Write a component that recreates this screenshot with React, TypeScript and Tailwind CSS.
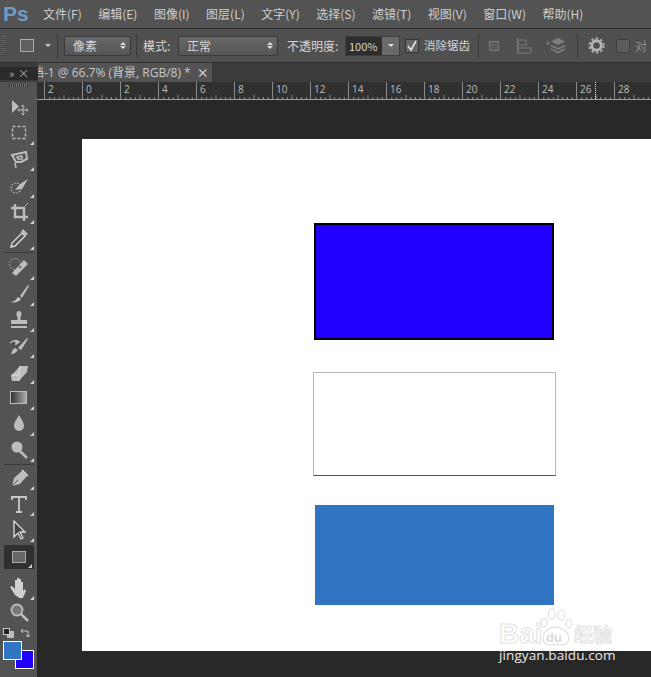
import type { ReactNode } from "react";

const menus = ["文件(F)", "编辑(E)", "图像(I)", "图层(L)", "文字(Y)", "选择(S)", "滤镜(T)", "视图(V)", "窗口(W)", "帮助(H)"];
const rulerLabels = ["2", "0", "2", "4", "6", "8", "10", "12", "14", "16", "18", "20", "22", "24", "26", "28"];

const c = "#bdbdbd";

function Icon({ children }: { children: ReactNode }) {
  return (
    <svg width="24" height="24" viewBox="0 0 24 24" fill="none">
      {children}
    </svg>
  );
}

function Corner() {
  return <span className="absolute right-[3px] bottom-[1px] h-0 w-0 border-l-[4px] border-b-[4px] border-l-transparent border-b-[#d0d0d0]" />;
}

// rows of the left toolbar, top to bottom
const tools: { h: number; corner?: boolean; line?: boolean; icon?: ReactNode }[] = [
  { h: 26, icon: <Icon><path d="M5 5v13l7-6.500z" fill={c} /><path d="M16 10v10M11 15h10M14.500 11.500L16 10l1.500 1.500M14.500 18.500L16 20l1.500-1.500M12.500 13.500L11 15l1.500 1.500M19.500 13.500L21 15l-1.500 1.500" stroke={c} strokeWidth="1" /></Icon> },
  { h: 26, corner: true, icon: <Icon><rect x="5.500" y="5.500" width="13" height="12" stroke={c} strokeWidth="1.500" strokeDasharray="3 2" /></Icon> },
  { h: 26, corner: true, icon: <Icon><path d="M5 8l14-3 1 7-6 3-5 0z" stroke={c} strokeWidth="2" /><path d="M10 10l5-1v3h-4zM8 16l1 5" stroke={c} strokeWidth="1.500" /></Icon> },
  { h: 27, corner: true, icon: <Icon><circle cx="9" cy="14" r="5" stroke={c} strokeWidth="1.200" strokeDasharray="1.500 1.500" /><path d="M21 5L13 10l-5 6 7-1z" fill={c} /></Icon> },
  { h: 26, corner: true, icon: <Icon><path d="M8 4v13h13M4 8h13v13" stroke={c} strokeWidth="2.400" /><path d="M18 6l3-3" stroke={c} /></Icon> },
  { h: 26, corner: true, icon: <Icon><path d="M4 21l1-4L15 7l3 3L8 20z" stroke="#d8d8d8" strokeWidth="1.400" /><path d="M14 6l2-3 5 5-3 2z" fill={c} /></Icon> },
  { h: 2, line: true },
  { h: 28, corner: true, icon: <Icon><circle cx="8" cy="9" r="5.500" stroke={c} strokeWidth="1" strokeDasharray="1.500 1.500" /><path d="M5 18L17 5l4 4L9 21z" fill={c} /><path d="M12 11l2 2" stroke="#555" strokeWidth="1.500" /></Icon> },
  { h: 26, corner: true, icon: <Icon><path d="M3 20c4 0 6-2 8-5l3 2c-2 3-6 4-11 3z" fill="#c8c8c8" /><path d="M13 14L21 3l1 1-7 12z" fill={c} /></Icon> },
  { h: 26, corner: true, icon: <Icon><path d="M12 3c3 0 3 4 1.500 6v3H20v4H4v-4h6.500V9C9 7 9 3 12 3z" fill={c} /><rect x="4" y="18" width="16" height="2" fill={c} /></Icon> },
  { h: 26, corner: true, icon: <Icon><path d="M3 9c4-3 7-3 9-1M12 8l-3-1v3z" stroke={c} strokeWidth="1.500" /><path d="M4 20c4 0 5-2 7-4l-3-2c-2 1-3 3-4 6zM11 14L20 4l1 1-7 11z" fill={c} /></Icon> },
  { h: 26, corner: true, icon: <Icon><path d="M4 16L13 6h8l-1 6-8 9H5z" fill={c} /><path d="M4 15h8l1-9M12 15l0 6" stroke="#ddd" strokeWidth="1" /></Icon> },
  { h: 26, corner: true, icon: <Icon><rect x="3.500" y="5.500" width="16" height="12" stroke="#bbb" /><rect x="4" y="6" width="15" height="11" fill="url(#grad)" /><defs><linearGradient id="grad"><stop stopColor="#333" /><stop offset="1" stopColor="#aaa" /></linearGradient></defs></Icon> },
  { h: 26, corner: true, icon: <Icon><path d="M12 3c2 4 5 7 5 11a5 5 0 0 1-10 0c0-4 3-7 5-11z" fill={c} /></Icon> },
  { h: 26, corner: true, icon: <Icon><circle cx="10" cy="9" r="5.500" fill={c} /><path d="M13 13l7 7" stroke={c} strokeWidth="2.500" /></Icon> },
  { h: 2, line: true },
  { h: 26, corner: true, icon: <Icon><path d="M5 20l2-8 8-7 5 5-7 8z" fill={c} /><path d="M5 20l6-6" stroke="#555" /><path d="M15 4l6 6" stroke="#ddd" strokeWidth="1.500" /></Icon> },
  { h: 26, corner: true, icon: <Icon><path d="M5 8V5h14v3M12 5v15M9 20h6" stroke="#c8c8c8" strokeWidth="1.800" /></Icon> },
  { h: 26, corner: true, icon: <Icon><path d="M7 3v16l4-4 3 6 2-1-3-6h5z" fill="#444" stroke="#ddd" strokeWidth="1.300" /></Icon> },
  { h: 28 },
  { h: 30, corner: true, icon: <Icon><path d="M8 21l-5-8 2-1 3 3V6h2v6-8h2v8-7h2v8-5h2v9l2-2 1 2-4 9z" fill="#d0d0d0" /></Icon> },
  { h: 24, icon: <Icon><circle cx="10" cy="9" r="5.500" fill="#777" stroke={c} strokeWidth="1.800" /><path d="M14 13l7 7" stroke={c} strokeWidth="2.500" /></Icon> },
];

export default function App() {
  return (
    <div className="flex h-[677px] w-[651px] flex-col overflow-hidden bg-[#282828] font-['Noto_Sans_CJK_SC','Liberation_Sans',sans-serif] text-[12px] text-[#d6d6d6]">
      {/* menu bar */}
      <div className="flex h-[29px] shrink-0 items-center border-b border-[#2e2e2e] bg-[#535353]">
        <span className="ml-[3px] w-[40px] font-['Liberation_Sans',sans-serif] text-[21px] font-bold text-[#6d9cc8]">Ps</span>
        <div className="flex gap-[16.500px] whitespace-nowrap text-[#cfcfcf]">
          {menus.map((m) => (
            <span key={m}>{m}</span>
          ))}
        </div>
      </div>

      {/* options bar */}
      <div className="flex h-[34px] shrink-0 items-center border-b border-[#2e2e2e] bg-[#505050] whitespace-nowrap">
        <div className="ml-[1px] h-[20px] w-[5px] bg-[repeating-linear-gradient(#6a6a6a_0_1px,#3d3d3d_1px_2px)]" />
        <div className="ml-[14px] h-[13px] w-[14px] border border-[#aaa] bg-[#606060]" />
        <div className="ml-[11px] h-0 w-0 border-x-[3px] border-t-[3px] border-x-transparent border-t-[#ccc]" />
        <div className="ml-[6px] h-[24px] w-px bg-[#3a3a3a]" />
        <Select width="w-[67px]" text="像素" className="ml-[6px]" />
        <div className="ml-[5px] h-[24px] w-px bg-[#3a3a3a]" />
        <span className="ml-[6px] w-[35px]">模式:</span>
        <Select width="w-[100px]" text="正常" />
        <span className="ml-[9px] w-[58px]">不透明度:</span>
        <div className="flex h-[20px] w-[55px] border border-[#3d3d3d]">
          <span className="w-[36px] bg-[#2e2e2e] pl-[3px] text-[11px] leading-[18px]">100%</span>
          <span className="flex flex-1 items-center justify-center bg-[#6a6a6a]">
            <span className="h-0 w-0 border-x-[3px] border-t-[3px] border-x-transparent border-t-[#e0e0e0]" />
          </span>
        </div>
        <div className="ml-[5px] flex h-[14px] w-[14px] items-center justify-center border border-[#333] bg-[#666]">
          <svg width="12" height="12" viewBox="0 0 12 12" fill="none">
            <path d="M2 6l3 4 5-9" stroke="#e4e4e4" strokeWidth="1.600" />
          </svg>
        </div>
        <span className="ml-[5px] w-[50px] text-[11.500px]">消除锯齿</span>
        <div className="ml-[4px] h-[24px] w-px bg-[#3a3a3a]" />
        <div className="ml-[10px] h-[10px] w-[10px] border border-[#7a7a7a] bg-[#5d5d5d]" />
        <svg className="ml-[17px]" width="16" height="18" viewBox="0 0 16 18" fill="none">
          <path d="M1.500 1v16" stroke="#7a7a7a" />
          <rect x="2" y="3" width="8" height="5" stroke="#7a7a7a" />
          <rect x="2" y="11" width="13" height="5" stroke="#7a7a7a" />
        </svg>
        <svg className="ml-[14px]" width="20" height="20" viewBox="0 0 20 20" fill="none">
          <path d="M12 2l7 3.500-7 3.500-7-3.500z" fill="#7d7d7d" />
          <path d="M5 9.500l7 3.500 7-3.500M5 13l7 3.500 7-3.500" stroke="#7d7d7d" strokeWidth="1.600" />
          <path d="M0 7h4M2 5v4" stroke="#7d7d7d" />
        </svg>
        <div className="ml-[11px] h-[24px] w-px bg-[#3a3a3a]" />
        <svg className="ml-[10px]" width="17" height="17" viewBox="0 0 18 18" fill="none">
          <circle cx="9" cy="9" r="5" stroke="#b4b4b4" strokeWidth="3" />
          <circle cx="9" cy="9" r="7.500" stroke="#b4b4b4" strokeWidth="2" strokeDasharray="2.500 2.400" />
        </svg>
        <div className="ml-[11px] h-[14px] w-[14px] rounded-[2px] border border-[#3f3f3f] bg-[#5c5c5c]" />
        <span className="ml-[5px] text-[#8c8c8c]">对</span>
      </div>

      {/* tab row */}
      <div className="flex h-[19px] shrink-0 bg-[#3b3b3b]">
        <div className="mt-[4px] mb-[2px] flex h-[13px] w-[38px] shrink-0 items-center justify-between bg-[#2a2a2a] pr-[9px] pl-[9px] text-[11px] leading-none text-[#b0b0b0]">
          <span>»</span>
          <span>×</span>
        </div>
        <div className="flex w-[174px] items-center overflow-hidden bg-[#535353] text-[#c8c8c8]">
          <span className="ml-[-6px] whitespace-nowrap font-['Open_Sans','Noto_Sans_CJK_SC',sans-serif] text-[12px]">档-1 @ 66.7% (背景, RGB/8) *</span>
          <span className="ml-[6px] text-[12px] font-bold leading-none">×</span>
        </div>
      </div>

      <div className="flex min-h-0 flex-1">
        {/* left toolbar */}
        <div className="flex w-[37px] shrink-0 flex-col items-center bg-[#535353]">
          <div className="mt-[2px] h-[3px] w-[19px] shrink-0 bg-[repeating-linear-gradient(90deg,#2e2e2e_0_1px,#777_1px_2px)]" />
          <div className="h-[7px] shrink-0" />
          {tools.map((t, i) =>
            t.line ? (
              <div key={i} className="flex shrink-0 items-center" style={{ height: t.h }}>
                <div className="h-px w-[30px] bg-[#383838]" />
              </div>
            ) : (
              <div key={i} className="relative flex w-[37px] shrink-0 items-center justify-center" style={{ height: t.h }}>
                {t.icon ?? (
                  <div className="flex h-[24px] w-[30px] items-center justify-center bg-[#303030]">
                    <div className="h-[12px] w-[14px] border border-[#aaa] bg-[#666]" />
                  </div>
                )}
                {t.corner && <Corner />}
                {!t.icon && <span className="absolute right-[5px] bottom-[3px] h-0 w-0 border-l-[4px] border-b-[4px] border-l-transparent border-b-[#d0d0d0]" />}
              </div>
            )
          )}
          {/* swatch row */}
          <div className="flex h-[16px] w-full shrink-0 items-center justify-between pl-[3px] pr-[6px]">
            <div className="relative h-[10px] w-[11px]">
              <div className="absolute right-0 bottom-0 h-[7px] w-[7px] bg-[#bbb]" />
              <div className="absolute top-0 left-0 h-[7px] w-[7px] border border-[#ccc] bg-[#222]" />
            </div>
            <svg width="11" height="11" viewBox="0 0 11 11" fill="none">
              <path d="M1 3h7v6M1 3l2-2M1 3l2 2M8 9L6 7M8 9l2-2" stroke="#c8c8c8" />
            </svg>
          </div>
          <div className="relative h-[30px] w-[31px] shrink-0">
            <div className="absolute right-0 bottom-[2px] h-[19px] w-[19px] border border-white bg-[#2200ff]" />
            <div className="absolute top-0 left-0 h-[19px] w-[19px] border border-white bg-[#3075c1]" />
          </div>
        </div>

        <div className="flex min-w-0 flex-1 flex-col">
          {/* ruler */}
          <div className="relative flex h-[18px] shrink-0 border-b border-[#a0a0a0] bg-[#303030] pl-[7px]">
            {rulerLabels.map((r, i) => (
              <div key={i} className="relative flex h-full w-[38px] shrink-0 border-l border-[#8a8a8a]">
                <span className="pl-[3px] text-[10px] leading-[14px] font-['Open_Sans',sans-serif] text-[#bdbdbd]">{r}</span>
                <svg className="absolute bottom-0 left-0" width="38" height="4" viewBox="0 0 38 4">
                  <path d="M4.750 4V2M9.500 4V2M14.250 4V2M19 4V0M23.750 4V2M28.500 4V2M33.250 4V2" stroke="#8a8a8a" />
                </svg>
              </div>
            ))}
            <div className="absolute top-0 bottom-0 left-[558px] border-l border-dotted border-[#e8e8e8]" />
          </div>

          {/* canvas */}
          <div className="relative min-h-0 flex-1 bg-[#282828] pt-[39px] pl-[45px]">
            <div className="flex h-[512px] flex-col items-start overflow-hidden bg-white">
              <div className="mt-[84px] ml-[232px] h-[117px] w-[240px] shrink-0 border-2 border-black bg-[#2200ff]" />
              <div className="mt-[32px] ml-[231px] h-[104px] w-[243px] shrink-0 border border-[#b9b9b9] border-b-[#555]" />
              <div className="mt-[29px] ml-[233px] h-[100px] w-[239px] shrink-0 bg-[#3075c1]" />
            </div>

            {/* watermark */}
            <div className="absolute top-[507px] left-[462px] h-[60px] w-[120px] font-['Liberation_Sans',sans-serif]">
              <span className="absolute top-[15px] left-0 text-[28px] font-bold leading-[24px] text-white [-webkit-text-stroke:1px_#e2e2e2]">Bai</span>
              <svg className="absolute top-0 left-[39px]" width="36" height="40" viewBox="0 0 42 46" fill="none" stroke="#e2e2e2" strokeWidth="1.500">
                <ellipse cx="7" cy="18" rx="3.500" ry="5" />
                <ellipse cx="16" cy="8" rx="4" ry="6" />
                <ellipse cx="27" cy="9" rx="4" ry="6" />
                <ellipse cx="36" cy="19" rx="3.500" ry="5" />
                <path d="M6 36c0-9 8-13 14-13s16 5 16 13c0 8-8 9-15 7-7 2-15 1-15-7z" />
              </svg>
              <span className="absolute top-[24px] left-[47px] text-[13px] font-bold leading-none text-[#dadada]">du</span>
              <span className="absolute top-[17px] left-[75px] whitespace-nowrap font-['Noto_Sans_CJK_SC',sans-serif] text-[19px] font-bold leading-none text-white [-webkit-text-stroke:1px_#e2e2e2]">经验</span>
              <span className="absolute top-[41px] left-0 whitespace-nowrap font-['Open_Sans',sans-serif] text-[13.500px] leading-[14px] tracking-[0.100px] text-[#e8e8e8]">jingyan.baidu.com</span>
            </div>
          </div>
        </div>
      </div>
    </div>
  );
}

function Select({ width, text, className = "" }: { width: string; text: string; className?: string }) {
  return (
    <div className={`flex h-[20px] items-center justify-between rounded-[2px] border border-[#3a3a3a] bg-gradient-to-b from-[#686868] to-[#555] pr-[4px] pl-[8px] ${width} ${className}`}>
      <span>{text}</span>
      <span className="flex flex-col gap-[1px]">
        <span className="h-0 w-0 border-x-[3px] border-b-[3px] border-x-transparent border-b-[#ddd]" />
        <span className="h-0 w-0 border-x-[3px] border-t-[3px] border-x-transparent border-t-[#ddd]" />
      </span>
    </div>
  );
}
